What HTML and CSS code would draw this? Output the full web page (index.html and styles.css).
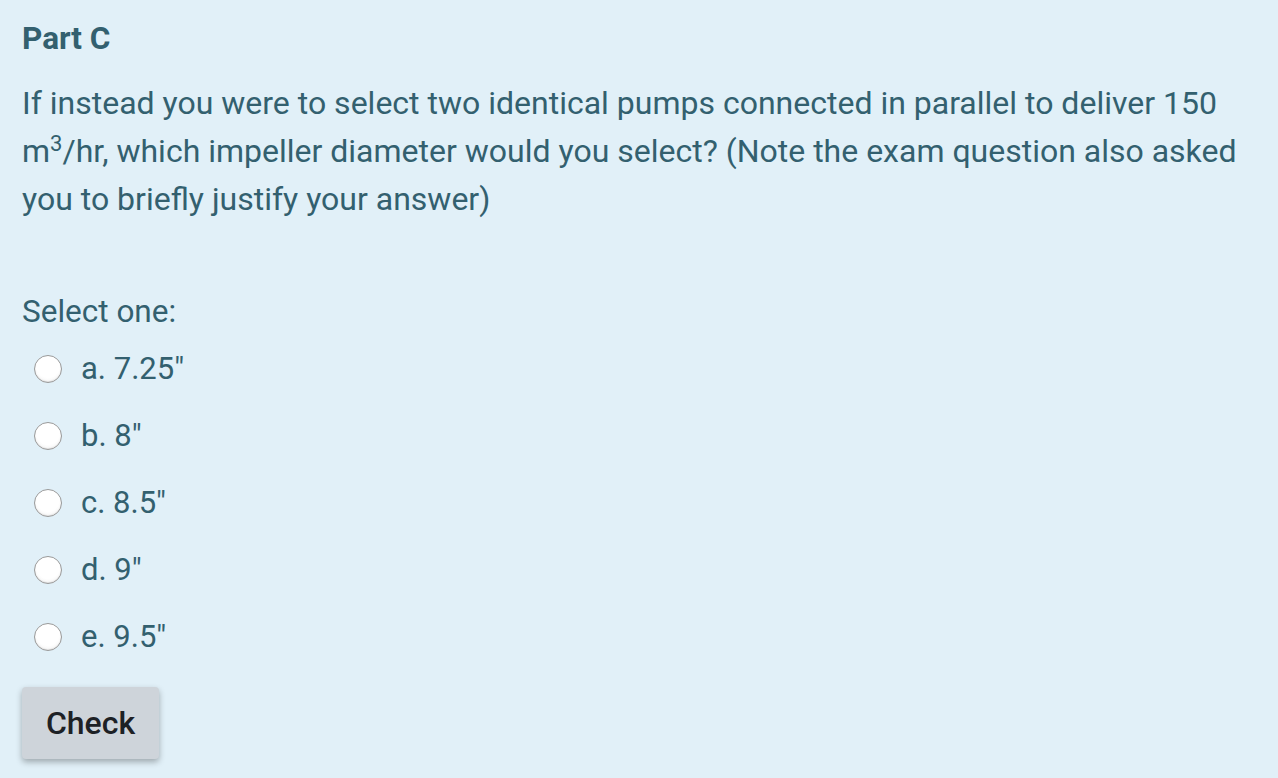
FILE: index.html
```html
<!DOCTYPE html>
<html>
<head>
<meta charset="utf-8">
<link rel="stylesheet" href="styles.css">
</head>
<body>
<div class="que">
  <h3 class="part">Part C</h3>
  <p class="qtext">If instead you were to select two identical pumps connected in parallel to deliver 150 m<sup>3</sup>/hr, which impeller diameter would you select? (Note the exam question also asked you to briefly justify your answer)</p>
  <div class="prompt">Select one:</div>
  <div class="answers">
    <label class="opt"><span class="radio"></span><span class="lbl">a. 7.25"</span></label>
    <label class="opt"><span class="radio"></span><span class="lbl">b. 8"</span></label>
    <label class="opt"><span class="radio"></span><span class="lbl">c. 8.5"</span></label>
    <label class="opt"><span class="radio"></span><span class="lbl">d. 9"</span></label>
    <label class="opt"><span class="radio"></span><span class="lbl">e. 9.5"</span></label>
  </div>
  <button class="check">Check</button>
</div>
</body>
</html>
```

FILE: styles.css
```css
html, body {
  margin: 0;
  padding: 0;
  background: #e1f0f8;
}
body {
  font-family: Roboto, "Noto Sans", sans-serif;
  color: #33606f;
  height: 778px;
  overflow: hidden;
}
.que {
  padding: 21px 22px 0 22px;
}
.part {
  margin: 0;
  font-size: 31.5px;
  line-height: 36px;
  font-weight: 700;
}
.qtext {
  margin: 22px 0 0 0;
  font-size: 32px;
  line-height: 48px;
}
.qtext sup {
  font-size: 22px;
  line-height: 0;
  vertical-align: 11px;
}
.prompt {
  margin-top: 65px;
  font-size: 31.5px;
  line-height: 48px;
}
.answers {
  margin-top: 9px;
  display: flex;
  flex-direction: column;
  gap: 19px;
}
.opt {
  display: flex;
  align-items: center;
  font-size: 31px;
  line-height: 48px;
}
.radio {
  box-sizing: border-box;
  width: 28px;
  height: 28px;
  border-radius: 50%;
  border: 1px solid #9a9a9a;
  background: radial-gradient(circle at 50% 40%, #ffffff 55%, #ececec 100%);
  box-shadow: inset 0 -1px 1px rgba(0,0,0,0.08);
  margin-left: 12px;
  margin-right: 19px;
  flex: none;
}
.check {
  margin-top: 26px;
  height: 72px;
  width: 137px;
  padding: 0;
  font-family: Roboto, "Noto Sans", sans-serif;
  font-size: 32px;
  font-weight: 500;
  color: #1d2125;
  background: #ced4da;
  border: none;
  border-radius: 4px;
  box-shadow: 0 3px 6px rgba(0,0,0,0.3);
}
```
